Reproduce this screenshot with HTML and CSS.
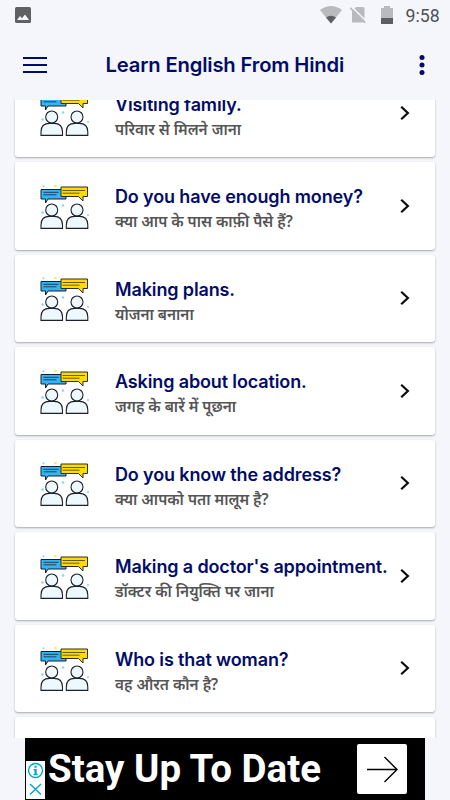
FILE: index.html
```html
<!DOCTYPE html>
<html lang="en">
<head>
<meta charset="utf-8">
<title>Learn English From Hindi</title>
<link rel="stylesheet" href="styles.css">
</head>
<body>
<svg class="defs" width="0" height="0">
  <symbol id="talk" viewBox="0 0 50 46">
    <path d="M1 6.500h25v9.500h-18l-2.500 4v-4H1z" fill="#35b4f4" stroke="#18202c"/>
    <path d="M3.500 9.300h15M3.500 11.800h13" stroke="#17435f" fill="none"/>
    <path d="M21 4h26.500v9.500h-4.500v4.500l-4.500-4.500H21z" fill="#ffdc00" stroke="#2d2d20"/>
    <path d="M22.500 7.500h22.500M22.500 10.200h17" stroke="#6b5b00" fill="none"/>
    <g fill="#edf8ff" stroke="#1d2129" stroke-width="1.100">
      <circle cx="11.700" cy="27" r="6"/><circle cx="37" cy="27" r="6"/>
      <path d="M1 45.400v-3.500q0-8.500 8.500-8.500h4.500q8.500 0 8.500 8.500v3.500zM26.300 45.400v-3.500q0-8.500 8.500-8.500h4.500q8.500 0 8.500 8.500v3.500z"/>
    </g>
    <g fill="#8bd5ff"><circle cx="3.500" cy="3.200" r="1"/><circle cx="23" cy="22.500" r="1.300"/><circle cx="2.500" cy="29.500" r="1.300"/><circle cx="48" cy="32" r="1.100"/></g>
    <circle cx="15.500" cy="3" r="1.300" fill="#ffe36b"/>
  </symbol>
  <symbol id="next" viewBox="0 0 10 16"><path d="M1.200 1.700l6.700 6.300-6.700 6.300" fill="none" stroke="#0b0b0b" stroke-width="2.200"/></symbol>
</svg>

<div class="status">
  <svg class="picture" width="16" height="16" viewBox="0 0 16 16"><rect width="16" height="16" rx="1.500" fill="#606164"/><path d="M2 13l3-4 2 2.300L10 7.500l4 5.500z" fill="#f5f6fb"/></svg>
  <svg class="wifi" width="22" height="18" viewBox="0 0 22 18"><path d="M0 4Q11-4 22 4L11 17.500z" fill="#b9babe"/><path d="M6 11.500q5-3.500 10 0l-5 6z" fill="#5d5e61"/></svg>
  <svg class="sim" width="16" height="18" viewBox="0 0 16 18"><path d="M2 5l4-4h7q1.500 0 1.500 1.500v14H2z" fill="#b9babe"/><path d="M1.200.3l15 15" stroke="#f5f6fb" stroke-width="1.600"/><path d="M.3 1.800l15 15" stroke="#b9babe" stroke-width="1.600"/></svg>
  <svg class="battery" width="12" height="18" viewBox="0 0 12 18"><path d="M0 2h3V0h6v2h3v10H0z" fill="#b9babe"/><path d="M0 12h12v6H0z" fill="#5d5e61"/></svg>
  <span class="clock">9:58</span>
</div>

<header class="bar">
  <svg width="24" height="16" viewBox="0 0 24 16"><path d="M0 1h24M0 8h24M0 15h24" stroke="#020c68" stroke-width="1.900"/></svg>
  <h1>Learn English From Hindi</h1>
  <svg width="6" height="20" viewBox="0 0 6 20" fill="#020c68"><circle cx="3" cy="2.600" r="2.500"/><circle cx="3" cy="10" r="2.500"/><circle cx="3" cy="17.400" r="2.500"/></svg>
</header>

<main class="viewport">
  <div class="list">
    <div class="card"><svg class="talk"><use href="#talk"/></svg><div class="text"><h2>Visiting family.</h2><p>परिवार से मिलने जाना</p></div><svg class="next"><use href="#next"/></svg></div>
    <div class="card"><svg class="talk"><use href="#talk"/></svg><div class="text"><h2>Do you have enough money?</h2><p>क्या आप के पास काफ़ी पैसे हैं?</p></div><svg class="next"><use href="#next"/></svg></div>
    <div class="card"><svg class="talk"><use href="#talk"/></svg><div class="text"><h2>Making plans.</h2><p>योजना बनाना</p></div><svg class="next"><use href="#next"/></svg></div>
    <div class="card"><svg class="talk"><use href="#talk"/></svg><div class="text"><h2>Asking about location.</h2><p>जगह के बारें में पूछना</p></div><svg class="next"><use href="#next"/></svg></div>
    <div class="card"><svg class="talk"><use href="#talk"/></svg><div class="text"><h2>Do you know the address?</h2><p>क्या आपको पता मालूम है?</p></div><svg class="next"><use href="#next"/></svg></div>
    <div class="card"><svg class="talk"><use href="#talk"/></svg><div class="text"><h2>Making a doctor's appointment.</h2><p>डॉक्टर की नियुक्ति पर जाना</p></div><svg class="next"><use href="#next"/></svg></div>
    <div class="card"><svg class="talk"><use href="#talk"/></svg><div class="text"><h2>Who is that woman?</h2><p>वह औरत कौन है?</p></div><svg class="next"><use href="#next"/></svg></div>
    <div class="card"></div>
  </div>
</main>

<aside class="ad">
  <svg class="adchoices" width="19" height="38" viewBox="0 0 19 38"><path d="M0 0h19v38H0z" fill="#fff"/><g fill="none" stroke="#00a5cc" stroke-width="1.400"><circle cx="9.500" cy="9.500" r="7"/><path d="M4 23l11 10.500M15 23L4 33.500"/></g><path d="M8.500 4.700h2.200v2H8.500zM7.500 8h3.200v5h1v1.300H7.500V13h1V9.300h-1z" fill="#00a5cc"/></svg>
  <span class="slogan">Stay Up To Date</span>
  <span class="go"><svg width="31" height="27" viewBox="0 0 31 27"><path d="M0 13.500h30M17.500 1l12.500 12.500L17.500 26" fill="none" stroke="#000" stroke-width="1.400"/></svg></span>
</aside>
</body>
</html>
```
FILE: styles.css
```css
* { box-sizing: border-box; }
body {
  margin: 0;
  width: 450px;
  height: 800px;
  overflow: hidden;
  display: flex;
  flex-direction: column;
  background: #f5f6fb;
  font-family: Inter, "Noto Sans", sans-serif;
}
svg { display: block; flex: none; }
.defs { display: none; }
h1, h2, p { margin: 0; white-space: nowrap; }
.status {
  height: 30px;
  display: flex;
  align-items: center;
  padding: 0 10px 0 15px;
}
.wifi { margin-left: 289px; }
.sim { margin-left: 8px; }
.battery { margin-left: 15px; }
.clock {
  margin-left: 12.5px;
  font: 400 17.7px/30px Roboto, sans-serif;
  color: #505154;
  padding-top: 1px;
}
.bar {
  height: 70px;
  display: flex;
  align-items: center;
  padding: 0 25px 0 23px;
}
.bar h1 {
  flex: 1;
  margin-left: 58.5px;
  font-size: 20.2px;
  line-height: 28px;
  font-weight: 600;
  letter-spacing: -0.15px;
  color: #020c68;
}
.viewport { height: 638px; overflow: hidden; }
.list {
  margin-top: -30.5px;
  padding: 0 15px;
  display: grid;
  gap: 5px;
}
.card {
  height: 87.5px;
  display: flex;
  align-items: center;
  padding: 0 25px;
  background: #fff;
  border-radius: 3px;
  box-shadow: 0 1px 2px rgba(40, 42, 50, .38);
}
.talk { width: 50px; height: 46px; }
.text { width: 285px; margin-left: 25px; padding-top: 6px; }
.text h2 {
  font-size: 18px;
  line-height: 26px;
  font-weight: 600;
  letter-spacing: -0.13px;
  color: #020c68;
}
.text p {
  font: 600 15.3px/23px "Noto Sans", "Noto Sans Devanagari", sans-serif;
  color: #555;
}
.next { width: 10px; height: 16px; }
.ad {
  position: relative;
  height: 62px;
  margin: 0 25px;
  background: #000;
  display: flex;
  align-items: center;
}
.adchoices { position: absolute; left: 1px; bottom: 1px; }
.slogan {
  width: 309px;
  margin-left: 23px;
  font: 700 38.5px/62px Roboto, sans-serif;
  color: #fff;
  white-space: nowrap;
}
.go {
  width: 50px;
  height: 50px;
  background: #fff;
  border-radius: 2px;
  display: grid;
  place-items: center;
}
```
